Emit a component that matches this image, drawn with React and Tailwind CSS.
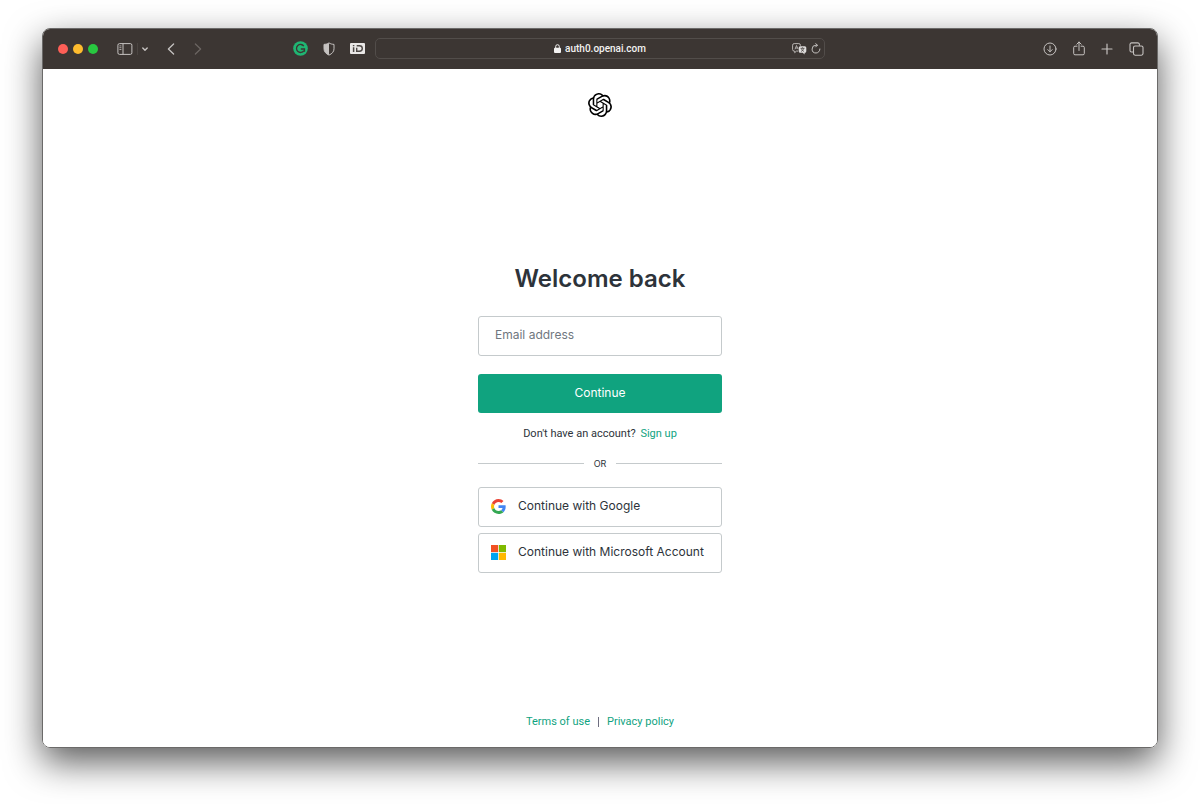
import React from 'react';
import { SiOpenai } from 'react-icons/si';

function GoogleIcon() {
  return (
    <svg viewBox="0 0 48 48" className="size-[15px]" aria-hidden="true">
      <path fill="#EA4335" d="M24 9.5c3.54 0 6.71 1.22 9.21 3.6l6.85-6.85C35.9 2.38 30.47 0 24 0 14.62 0 6.51 5.38 2.56 13.22l7.98 6.19C12.43 13.72 17.74 9.5 24 9.5z" />
      <path fill="#4285F4" d="M46.98 24.55c0-1.57-.15-3.09-.38-4.55H24v9.02h12.94c-.58 2.96-2.26 5.48-4.78 7.18l7.73 6c4.51-4.18 7.09-10.36 7.09-17.65z" />
      <path fill="#FBBC05" d="M10.53 28.59c-.48-1.45-.76-2.99-.76-4.59s.27-3.14.76-4.59l-7.98-6.19C.92 16.46 0 20.12 0 24c0 3.88.92 7.54 2.56 10.78l7.97-6.19z" />
      <path fill="#34A853" d="M24 48c6.48 0 11.93-2.13 15.89-5.81l-7.73-6c-2.15 1.45-4.92 2.3-8.16 2.3-6.26 0-11.57-4.22-13.47-9.91l-7.98 6.19C6.51 42.62 14.62 48 24 48z" />
    </svg>
  );
}

function MicrosoftIcon() {
  return (
    <svg viewBox="0 0 21 21" className="size-[15px]" aria-hidden="true">
      <path fill="#f25022" d="M0 0h10v10H0z" />
      <path fill="#7fba00" d="M11 0h10v10H11z" />
      <path fill="#00a4ef" d="M0 11h10v10H0z" />
      <path fill="#ffb900" d="M11 11h10v10H11z" />
    </svg>
  );
}

function Toolbar() {
  return (
    <header className="grid h-10 shrink-0 grid-cols-[1fr_minmax(0,450px)_1fr] items-center bg-[#3c3633] pb-px text-[#c5c2c0]">
      {/* Window controls, sidebar, history */}
      <div className="flex items-center pl-[15px]">
        <div className="flex gap-[5px]">
          <button aria-label="Close" className="size-[10px] rounded-full bg-[#fe5f57]" />
          <button aria-label="Minimize" className="size-[10px] rounded-full bg-[#febc2e]" />
          <button aria-label="Zoom" className="size-[10px] rounded-full bg-[#28c840]" />
        </div>
        <button aria-label="Sidebar" className="ml-[19px]">
          <svg width="16" height="12" viewBox="0 0 16 12" fill="none" stroke="currentColor">
            <rect x="0.9" y="0.6" width="14" height="10.8" rx="1.6" />
            <path d="M6 .6v10.8" />
            <path d="M2.4 2.9h2M2.4 4.7h2M2.4 6.5h2" strokeWidth="0.8" />
          </svg>
        </button>
        <span className="ml-1 h-3 w-px bg-[#4b4542]" />
        <button aria-label="Tab groups" className="ml-1">
          <svg width="6" height="6" viewBox="0 0 6 6" fill="none" stroke="currentColor" strokeWidth="1.4" strokeLinecap="round" strokeLinejoin="round">
            <path d="M.8 2 3 4.3 5.2 2" />
          </svg>
        </button>
        <button aria-label="Back" className="ml-[19px]">
          <svg width="8" height="12" viewBox="0 0 8 12" fill="none" stroke="currentColor" strokeWidth="1.3" strokeLinecap="round" strokeLinejoin="round">
            <path d="M6.6 1 1.4 6l5.2 5" />
          </svg>
        </button>
        <button aria-label="Forward" className="ml-[19px] text-[#6b6562]">
          <svg width="8" height="12" viewBox="0 0 8 12" fill="none" stroke="currentColor" strokeWidth="1.3" strokeLinecap="round" strokeLinejoin="round">
            <path d="m1.4 1 5.2 5-5.2 5" />
          </svg>
        </button>
        {/* Extensions */}
        <div className="ml-auto flex items-center gap-[15px] pr-[10px]">
          <button aria-label="Grammarly">
            <svg width="15" height="15" viewBox="0 0 15 15" fill="none">
              <circle cx="7.5" cy="7.5" r="7.3" fill="#1fb673" />
              <path d="M10.8 5.2A4 4 0 1 0 10.9 9.6" stroke="#3c3633" strokeWidth="1.3" />
              <path d="M7.8 8h3.7v2.8" stroke="#3c3633" strokeWidth="1.3" />
            </svg>
          </button>
          <button aria-label="Privacy report">
            <svg width="12" height="14" viewBox="0 0 12 14" fill="none">
              <path d="M6 .9c1.5 1 3.2 1.4 5 1.5v4.4c0 2.9-2 5-5 6.3-3-1.3-5-3.4-5-6.3V2.4C2.8 2.3 4.5 1.9 6 .9Z" stroke="currentColor" />
              <path d="M6 .9v12.2c-3-1.3-5-3.4-5-6.3V2.4c1.8-.1 3.5-.5 5-1.5Z" fill="currentColor" />
            </svg>
          </button>
          <button aria-label="iD">
            <svg width="15" height="11" viewBox="0 0 15 11" fill="none">
              <rect width="15" height="11" rx="1" fill="#e9e7e6" />
              <path d="M3.6 4.2v4.7M3.6 1.9v1.4" stroke="#4d4845" strokeWidth="1.5" />
              <path d="M6.7 2.8h2.7c1.8 0 2.9 1 2.9 2.7s-1.1 2.7-2.9 2.7H6.7V4.7" stroke="#4d4845" strokeWidth="1.4" />
            </svg>
          </button>
        </div>
      </div>

      {/* Address bar */}
      <div className="grid h-[21px] grid-cols-[1fr_auto_1fr] items-center rounded-[5px] border border-[#524d4a] px-[3px]">
        <span />
        <div className="flex items-center gap-1 text-[#f3f2f1]">
          <svg width="7" height="9" viewBox="0 0 7 9" fill="none" aria-hidden="true">
            <rect y="3.7" width="7" height="5.3" rx="1" fill="currentColor" />
            <path d="M1.7 4V2.5a1.8 1.8 0 0 1 3.6 0V4" stroke="currentColor" />
          </svg>
          <span className="font-['Roboto',sans-serif] text-[10px] leading-4 font-medium">auth0.openai.com</span>
        </div>
        <div className="flex items-center justify-end gap-1">
          <button aria-label="Translate">
            <svg width="15" height="12" viewBox="0 0 15 12" fill="none">
              <path d="M6 8.1H4.4L2.7 9.7V8.1h-.5A1.6 1.6 0 0 1 .6 6.5V2.2A1.6 1.6 0 0 1 2.2.6h4.6a1.6 1.6 0 0 1 1.6 1.6v.6" stroke="currentColor" strokeWidth="0.9" />
              <path d="m3 6.3 1.5-3.8L6 6M3.5 5h2" stroke="currentColor" strokeWidth="0.8" />
              <path d="M8.2 3.2h4.6A1.5 1.5 0 0 1 14.3 4.7v3.6a1.5 1.5 0 0 1-1.5 1.5h-.2v1.7l-1.9-1.7H8.2a1.5 1.5 0 0 1-1.5-1.5V4.7a1.5 1.5 0 0 1 1.5-1.5Z" fill="#dedcdb" />
              <path d="M8.5 5.3h4M10.5 4.3v1M9 8.4c1.6-.6 2.4-1.6 2.6-3M9.4 5.5c.3 1.3 1.1 2.3 2.6 2.9" stroke="#3c3633" strokeWidth="0.7" />
            </svg>
          </button>
          <button aria-label="Reload">
            <svg width="10" height="11" viewBox="0 0 10 11" fill="none" stroke="currentColor" strokeLinecap="round" strokeLinejoin="round">
              <path d="M8.9 6A3.9 3.9 0 1 1 5 2.2h1.3" />
              <path d="M4.7.6 6.4 2.2 4.7 3.9" />
            </svg>
          </button>
        </div>
      </div>

      {/* Downloads, share, new tab, tab overview */}
      <div className="flex items-center justify-end gap-4 pr-[13px]">
        <button aria-label="Downloads">
          <svg width="14" height="14" viewBox="0 0 14 14" fill="none" stroke="currentColor" strokeLinecap="round" strokeLinejoin="round">
            <circle cx="7" cy="7" r="6" />
            <path d="M7 4v5.7M4.8 7.6 7 9.8l2.2-2.2" />
          </svg>
        </button>
        <button aria-label="Share">
          <svg width="12" height="15" viewBox="0 0 12 15" fill="none" stroke="currentColor" strokeLinecap="round" strokeLinejoin="round">
            <path d="M4 5.2H2A1.3 1.3 0 0 0 .7 6.5v6A1.3 1.3 0 0 0 2 13.8h8a1.3 1.3 0 0 0 1.3-1.3v-6A1.3 1.3 0 0 0 10 5.2H8" />
            <path d="M6 9.5V1M3.8 3.2 6 1l2.2 2.2" />
          </svg>
        </button>
        <button aria-label="New tab">
          <svg width="12" height="12" viewBox="0 0 12 12" fill="none" stroke="currentColor" strokeWidth="1.2" strokeLinecap="round">
            <path d="M6 1v10M1 6h10" />
          </svg>
        </button>
        <button aria-label="Tab overview">
          <svg width="15" height="14" viewBox="0 0 15 14" fill="none" stroke="currentColor" strokeWidth="1.1">
            <rect x="4.5" y="4" width="9.5" height="9.2" rx="1.6" />
            <path d="M4.3 10H2.6A1.6 1.6 0 0 1 1 8.4V2.5A1.6 1.6 0 0 1 2.6.9h6.2a1.6 1.6 0 0 1 1.6 1.6v1.3" />
          </svg>
        </button>
      </div>
    </header>
  );
}

const providers = [
  { name: 'Google', label: 'Continue with Google', Icon: GoogleIcon },
  { name: 'Microsoft', label: 'Continue with Microsoft Account', Icon: MicrosoftIcon },
];

function LoginPage() {
  return (
    <div className="flex flex-1 flex-col items-center bg-white pt-6 pb-[15px] font-['Inter',sans-serif] text-[#2d333a]">
      <SiOpenai className="size-6 text-black" />

      <main className="flex w-[244px] flex-1 flex-col justify-center pt-[6px]">
        <h1 className="text-center text-[24px] leading-8 font-semibold whitespace-nowrap">Welcome back</h1>

        <form className="mt-[21px]" onSubmit={(e) => e.preventDefault()}>
          <input
            type="email"
            aria-label="Email address"
            placeholder="Email address"
            className="block h-10 w-full rounded-[3px] border border-[#c5cacc] px-4 pb-[2px] text-[12px] placeholder:text-[#6f7780]"
          />
          <button type="submit" className="mt-[18px] h-[39px] w-full rounded-[3px] bg-[#10a37f] text-[12px] text-white">
            Continue
          </button>
        </form>

        <p className="mt-[13px] text-center font-['Roboto',sans-serif] text-[11px] leading-4">
          Don't have an account? <a href="#signup" className="ml-[2px] text-[#10a37f]">Sign up</a>
        </p>

        <div className="mt-[14px] flex items-center gap-[10px] text-[9px] leading-4">
          <span className="h-px flex-1 bg-[#c5cacc]" />
          OR
          <span className="h-px flex-1 bg-[#c5cacc]" />
        </div>

        <div className="mt-[15px] flex flex-col gap-[6px]">
          {providers.map(({ name, label, Icon }) => (
            <button key={name} className="flex h-10 items-center gap-3 rounded-[3px] border border-[#c5cacc] px-3 text-[12px]">
              <Icon />
              <span className="pb-[2px] whitespace-nowrap">{label}</span>
            </button>
          ))}
        </div>
      </main>

      <footer className="flex items-center gap-2 font-['Roboto',sans-serif] text-[11px] leading-5 text-[#10a37f]">
        <a href="#terms">Terms of use</a>
        <span className="h-[10px] w-px bg-[#6e6e80]" />
        <a href="#privacy">Privacy policy</a>
      </footer>
    </div>
  );
}

function App() {
  return (
    <div className="flex min-h-screen flex-col bg-white px-[42px] pt-7 pb-14">
      <div className="flex flex-1 flex-col overflow-hidden rounded-lg border border-[#6b6a69] shadow-[0_14px_36px_rgba(0,0,0,0.65)]">
        <Toolbar />
        <LoginPage />
      </div>
    </div>
  );
}

export default App;
